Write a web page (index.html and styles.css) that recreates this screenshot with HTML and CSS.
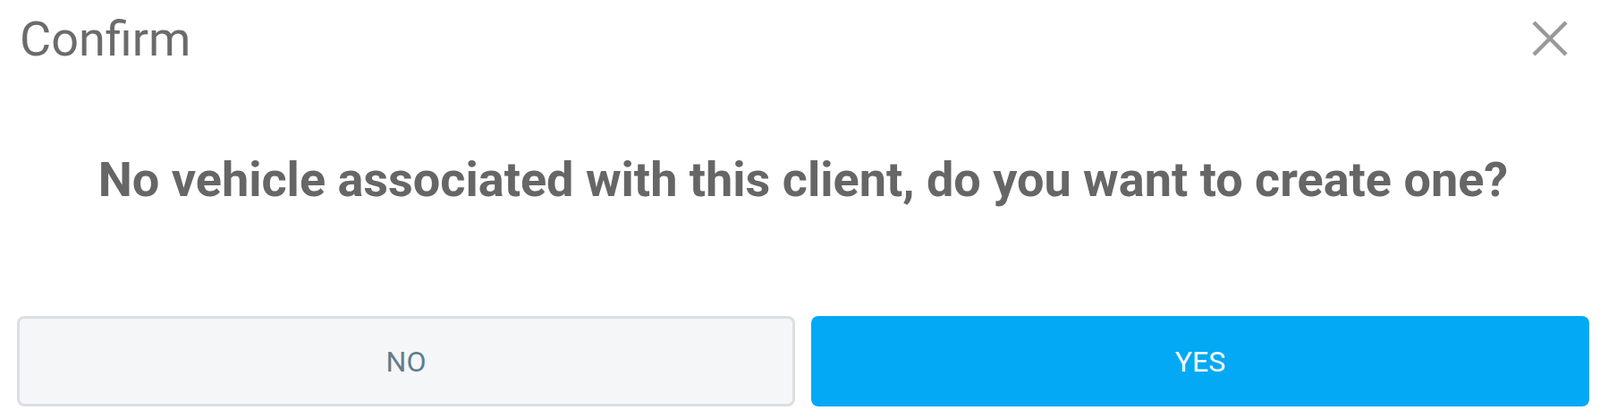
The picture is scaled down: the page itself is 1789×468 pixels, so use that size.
FILE: index.html
```html
<!DOCTYPE html>
<html lang="en">
<head>
    <meta charset="UTF-8">
    <meta name="viewport" content="width=device-width, initial-scale=1.0">
    <title>Confirm</title>
    <link rel="stylesheet" href="styles.css">
</head>
<body>
<div class="dialog">
    <div class="dialogHeader">
        <h1 class="dialogTitle">Confirm</h1>
        <button class="closeBtn" aria-label="Close">
            <svg width="40" height="40" viewBox="0 0 40 40">
                <path d="M2 2 L38 38 M38 2 L2 38" stroke="#999999" stroke-width="4.5" fill="none"/>
            </svg>
        </button>
    </div>

    <p class="dialogMessage">No vehicle associated with this client, do you want to create one?</p>

    <div class="dialogActions">
        <button class="actionBtn noBtn">NO</button>
        <button class="actionBtn yesBtn">YES</button>
    </div>
</div>
</body>
</html>
```

FILE: styles.css
```css
body {
    margin: 0;
    background-color: #ffffff;
    font-family: Roboto, "Liberation Sans", sans-serif;
    overflow: hidden;
}

.dialog {
    padding: 12px 12px 0 19px;
}

.dialogHeader {
    display: flex;
    justify-content: space-between;
    align-items: flex-start;
}

.dialogTitle {
    margin: 0;
    padding-left: 3px;
    font-size: 54px;
    font-weight: 400;
    line-height: 64px;
    color: #6b6b6b;
}

.closeBtn {
    background: none;
    border: none;
    padding: 0;
    margin: 11px 24px 0 0;
    width: 40px;
    height: 40px;
    cursor: pointer;
}

.closeBtn svg {
    display: block;
}

.dialogMessage {
    margin: 95px 0 0;
    text-align: center;
    font-size: 54px;
    font-weight: 700;
    line-height: 59px;
    color: #666666;
}

.dialogActions {
    display: grid;
    grid-template-columns: 1fr 1fr;
    gap: 18px;
    margin-top: 123px;
}

.actionBtn {
    height: 101px;
    font-family: Roboto, "Liberation Sans", sans-serif;
    font-size: 32px;
    border-radius: 8px;
    cursor: pointer;
}

.noBtn {
    background-color: #f5f6f8; /* light grey */
    border: 3px solid #d9dfe3;
    color: #607d8b;
}

.yesBtn {
    background-color: #03a9f4; /* light blue */
    border: none;
    color: #ffffff;
}
```
